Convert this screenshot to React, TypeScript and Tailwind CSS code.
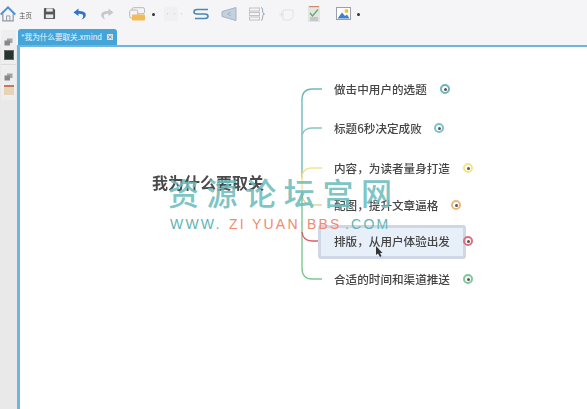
import React from 'react';

const cjk = "font-['Noto_Sans_CJK_SC','Noto_Sans',sans-serif]";

const nodes = [
  { text: '做击中用户的选题', top: 81, dot: 445, ring: 'border-[#6fb3b8]' },
  { text: '标题6秒决定成败', top: 120, dot: 439, ring: 'border-[#7cc4c0]' },
  { text: '内容，为读者量身打造', top: 160, dot: 468, ring: 'border-[#f3e38a]' },
  { text: '配图，提升文章逼格', top: 197, dot: 456, ring: 'border-[#edb77c]' },
  { text: '排版，从用户体验出发', top: 233, dot: 468, ring: 'border-[#d9707c]' },
  { text: '合适的时间和渠道推送', top: 271, dot: 468, ring: 'border-[#7fc79a]' },
];

const Home = () => (
  <svg width="16" height="16" viewBox="0 0 17 17" fill="none">
    <path d="M0.8 9 L8.5 1.5 L16.2 9" stroke="#4a8fd4" strokeWidth="2" />
    <path d="M3 8 V15.8 H14 V8" stroke="#8d99a5" strokeWidth="1.3" />
    <path d="M7 15.8 V10.5 H10.5 V15.8" stroke="#8d99a5" strokeWidth="1" />
  </svg>
);

const Save = () => (
  <svg width="13" height="13" viewBox="0 0 14 14">
    <path d="M1 2 Q1 1 2 1 H11 L13 3 V12 Q13 13 12 13 H2 Q1 13 1 12 Z" fill="#55565c" />
    <rect x="3.5" y="1.5" width="7" height="3.5" fill="#e8e8ea" />
    <rect x="3" y="8" width="8" height="4" fill="#e8e8ea" />
  </svg>
);

const Arrow = ({ color, flip }: { color: string; flip?: boolean }) => (
  <svg width="13" height="12" viewBox="0 0 13 12" className={flip ? '-scale-x-100' : ''}>
    <path d="M5.5 0.5 L0.5 4.5 L5.5 8 V5.8 Q10 5.6 10.2 8 Q10.2 10 8.5 11.5 Q13 10 12.8 6.5 Q12.4 2.8 5.5 3 Z" fill={color} />
  </svg>
);

const Style = () => (
  <svg width="17" height="14" viewBox="0 0 17 14" fill="none">
    <rect x="3" y="0.7" width="12.5" height="6" rx="1.5" stroke="#b8b8bc" fill="#f4f4f6" />
    <rect x="0.7" y="3" width="8" height="8" rx="1.5" stroke="#b8b8bc" fill="#f4f4f6" />
    <rect x="3" y="7.5" width="13" height="6" rx="1" fill="#f3bb55" />
  </svg>
);

const Relation = () => (
  <svg width="16" height="14" viewBox="0 0 16 14" fill="none" stroke="#4a86b8" strokeWidth="1.6">
    <path d="M15 2.5 H4 Q1 2.5 1 5 Q1 7 4 7 H12 Q15 7 15 9.3 Q15 11.5 12 11.5 H2" />
  </svg>
);

const Boundary = () => (
  <svg width="16" height="14" viewBox="0 0 16 14">
    <path d="M1 4.5 L15 0.5 V13.5 L1 9.5 Z" fill="#c4d0dc" stroke="#a3b4c5" />
    <path d="M10 5 L6.5 7 L10 9" fill="none" stroke="#a3b4c5" />
  </svg>
);

const Summary = () => (
  <svg width="16" height="14" viewBox="0 0 16 14" fill="none" stroke="#c2c2c6">
    <rect x="0.5" y="1" width="10" height="3" />
    <rect x="0.5" y="5.5" width="10" height="3" />
    <rect x="0.5" y="10" width="10" height="3" />
    <path d="M12 0.5 Q14 0.5 13.6 4 Q13.6 7 15.5 7 Q13.6 7 13.6 10 Q14 13.5 12 13.5" stroke="#9aaab8" />
  </svg>
);

const Note = () => (
  <svg width="15" height="12" viewBox="0 0 15 12" fill="none" stroke="#e2e2e5">
    <path d="M4 1 H14 V8 L11 11 H4 Z" />
    <path d="M0 5.5 H5 M2.5 3 V8" />
  </svg>
);

const Task = () => (
  <svg width="12" height="16" viewBox="0 0 12 16">
    <rect x="0" y="0" width="12" height="16" fill="#e4e4e4" />
    <rect x="1" y="0" width="10" height="1.2" fill="#c98a70" />
    <path d="M2 7 L4.5 10 L10 3.5" fill="none" stroke="#5fae5f" strokeWidth="1.3" />
    <path d="M2 12 H10 M2 14 H10" stroke="#9a9a9a" strokeWidth="0.8" />
  </svg>
);

const Picture = () => (
  <svg width="15" height="13" viewBox="0 0 15 13">
    <rect x="0.5" y="0.5" width="14" height="12" fill="#fff" stroke="#9aa0a8" />
    <circle cx="10.5" cy="4" r="2" fill="#f2c23c" />
    <path d="M1.5 11.5 L6 5.5 L9 9 L11 7.5 L13.5 11.5 Z" fill="#3f7fd0" />
  </svg>
);

const Layers = () => (
  <svg width="9" height="8" viewBox="0 0 9 8">
    <rect x="3" y="0.5" width="5.5" height="4.5" fill="#a4a4a8" />
    <rect x="0.5" y="2.5" width="5.5" height="5" fill="#88888c" />
  </svg>
);

const Dot = () => <span className="w-[3px] h-[3px] rounded-full bg-[#333]" />;

export default function App() {
  return (
    <div className={`w-[587px] h-[409px] overflow-hidden flex flex-col bg-[#f5f5f7] ${cjk}`}>
      {/* toolbar */}
      <div className="h-[45px] shrink-0 flex items-start pt-[6px] blur-[0.3px]">
        <Home />
        <span className="ml-[3px] mt-[4px] text-[6.5px] leading-[10px] text-[#555]">主页</span>
        <span className="ml-[11px] mt-[1px] flex"><Save /></span>
        <span className="ml-[17px] mt-[2px] flex"><Arrow color="#2f74c8" /></span>
        <span className="ml-[15px] mt-[2px] flex"><Arrow color="#c8c8cb" flip /></span>
        <span className="ml-[15px] mt-[1px] flex"><Style /></span>
        <span className="ml-[6px] mt-[7px] flex"><Dot /></span>
        <span className="ml-[9px] w-[14px] h-[14px] mt-[1px] bg-[#f0f0f2] text-[#d4d4d4] text-[7px] leading-[12px] text-center">···</span>
        <span className="ml-[15px] mt-[1px] flex"><Relation /></span>
        <span className="ml-[12px] mt-[1px] flex"><Boundary /></span>
        <span className="ml-[12px] mt-[1px] flex"><Summary /></span>
        <span className="ml-[14px] mt-[3px] flex"><Note /></span>
        <span className="ml-[14px] flex"><Task /></span>
        <span className="ml-[16px] mt-[1px] flex"><Picture /></span>
        <span className="ml-[6px] mt-[7px] flex"><Dot /></span>
      </div>

      <div className="flex-1 flex min-h-0">
        {/* left dock */}
        <div className="w-[17px] shrink-0 bg-[#e9e9ea] flex flex-col">
          <div className="-mt-[15px] h-[35px] mx-px border-b border-[#dcdcdc] bg-[#eeeeef] flex flex-col items-center pt-[8px] gap-[4px]">
            <Layers />
            <span className="w-[10px] h-[10px] bg-[#24352e] border border-[#666]" />
          </div>
          <div className="h-[35px] mx-px bg-[#eeeeef] flex flex-col items-center pt-[8px] gap-[4px]">
            <Layers />
            <span className="w-[10px] h-[10px] bg-[#e5d4b8] border-t-2 border-[#c9775c]" />
          </div>
        </div>

        {/* editor */}
        <div className="flex-1 flex flex-col -mt-[16px]">
          <div className="h-[16px] w-[99px] ml-px shrink-0 bg-[#46a5d8] rounded-t-[3px] flex items-center pl-[3px] gap-[5px]">
            <span className="text-[7.6px] leading-none text-white/90 whitespace-nowrap">*我为什么要取关.xmind</span>
            <span className="w-[6px] h-[6px] bg-[#d8e4ea] text-[#2d4f66] text-[6px] leading-[6px] text-center">×</span>
          </div>
          <div className="relative flex-1 bg-white border-t-[2px] border-l-[3px] border-[#6db6e2]">
            <Canvas />
          </div>
        </div>
      </div>
    </div>
  );
}

// everything in here sits on the free mind map canvas, so x/y are page coords minus the canvas origin
function Canvas() {
  return (
    <div className="absolute left-[-20px] top-[-47px] w-[587px] h-[409px] overflow-hidden">
      <svg className="absolute left-0 top-0" width="587" height="409" fill="none" strokeWidth="1.4">
        <path d="M322 89 H312 Q302 89 302 100 V178" stroke="#6fb9bb" />
        <path d="M322 128 H312 Q304 128 302 135" stroke="#86c8c2" />
        <path d="M322 168 H312 Q302 168 302 178 V192" stroke="#f5e48f" />
        <path d="M322 205 H312 Q304 205 302 196" stroke="#ecd09a" />
        <path d="M302 192 V268 Q302 279 312 279 H322" stroke="#7fc795" />
        <path d="M302 232 Q303 241 312 241 H322" stroke="#d8606a" />
      </svg>

      <div className="absolute left-[152px] top-[171px] text-[16px] leading-[22px] font-bold text-[#4a4a4a] blur-[0.4px]">我为什么要取关</div>

      <div className="absolute left-[318px] top-[225px] w-[148px] h-[34px] rounded-[3px] border-[3px] border-[#cfd7e6] bg-[#e7eff9] blur-[0.4px]" />

      {nodes.map((n) => (
        <React.Fragment key={n.text}>
          <div className="absolute left-[334px] text-[11.6px] leading-[16px] font-medium text-[#454545] whitespace-nowrap blur-[0.3px]" style={{ top: n.top }}>
            {n.text}
          </div>
          <div
            className={`absolute w-[10px] h-[10px] rounded-full border-2 ${n.ring} flex items-center justify-center`}
            style={{ left: n.dot - 5, top: n.top + 3 }}
          >
            <span className="w-[3px] h-[3px] rounded-full bg-[#555]" />
          </div>
        </React.Fragment>
      ))}

      {/* cursor */}
      <svg className="absolute left-[375px] top-[246px]" width="8" height="12" viewBox="0 0 8 12">
        <path d="M1 0 L1 9 L3 7.5 L5 11 L6.5 10 L5 7 L7.5 7 Z" fill="#333" />
      </svg>

      {/* watermark */}
      <div className="absolute left-[168px] top-[171px] text-[31px] leading-[42px] tracking-[7.6px] font-medium text-[#6dbdbd]/90 whitespace-nowrap">资源论坛宫网</div>
      <div className="absolute left-[170px] top-[215px] flex text-[14px] leading-[18px] tracking-[2.2px] whitespace-nowrap font-['Liberation_Sans',sans-serif]">
        <span className="w-[59px] text-[#5fb5b5]">WWW.</span>
        <span className="w-[23px] text-[#f08a70]">ZI</span>
        <span className="w-[55px] text-[#f08a70]">YUAN</span>
        <span className="w-[38px] text-[#f08a70]">BBS</span>
        <span className="text-[#5fb5b5]">.COM</span>
      </div>
    </div>
  );
}
